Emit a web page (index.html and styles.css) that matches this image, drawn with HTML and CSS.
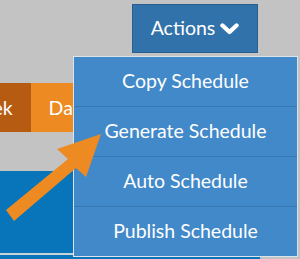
FILE: index.html
```html
<!DOCTYPE html>
<html lang="en">
<head>
  <meta charset="UTF-8">
  <title>Schedule Actions</title>
  <link rel="stylesheet" href="styles.css">
</head>
<body>
  <div class="page">
    <div class="toolbar">
      <button class="actions">Actions
        <svg class="chevron" width="19" height="12" viewBox="0 0 19 12"><polyline points="2.5,2.5 9.5,9 16.5,2.5" fill="none" stroke="#fff" stroke-width="4.4" stroke-linecap="round" stroke-linejoin="round"/></svg>
      </button>
    </div>

    <div class="tabs">
      <div class="tab active">Week</div>
      <div class="tab">Day</div>
    </div>

    <div class="spacer"></div>
    <div class="panel"></div>
    <div class="divider"></div>
    <div class="panel next"></div>

    <ul class="menu">
      <li>Copy Schedule</li>
      <li>Generate Schedule</li>
      <li>Auto Schedule</li>
      <li>Publish Schedule</li>
    </ul>

    <svg class="pointer" width="300" height="259" viewBox="0 0 300 259">
      <polygon points="101,134 57,149 68,159 6,210 14,221 76,168 86,177" fill="#ee8a22"/>
    </svg>
  </div>
</body>
</html>
```

FILE: styles.css
```css
body {
  margin: 0;
  background-color: #c3c3c3;
  font-family: Lato, "Open Sans", sans-serif;
}

.page {
  position: relative;
  width: 300px;
  height: 259px;
  overflow: hidden;
}

.toolbar {
  display: flex;
  justify-content: flex-end;
  height: 83px;
  padding-right: 42px;
  box-sizing: border-box;
}

.actions {
  display: flex;
  align-items: center;
  justify-content: center;
  gap: 5px;
  margin-top: 4px;
  width: 126px;
  height: 49px;
  padding: 0 0 2px;
  background-color: #3272ab;
  border: 1px solid #2a5e8e;
  color: #fff;
  font-family: Lato, sans-serif;
  font-size: 19.5px;
}

.chevron {
  margin-top: 2px;
}

.tabs {
  display: flex;
  height: 49px;
}

.tab {
  display: flex;
  align-items: center;
  padding: 0 18px;
  background-color: #ee8a22;
  color: #fff;
  font-size: 19.5px;
}

.tab.active {
  background-color: #b65c12;
  margin-left: -55px;
  padding: 0 18px;
}

.spacer {
  height: 39px;
}

.panel {
  width: 73px;
  height: 82px;
  background-color: #0874ba;
  border-right: 1px solid #a9b9c8;
}

.panel.next {
  width: 260px;
  height: 10px;
}

.divider {
  width: 74px;
  height: 2px;
  background-color: #c9d2da;
}

.menu {
  position: absolute;
  left: 73px;
  top: 56px;
  width: 223px;
  margin: 0;
  padding: 0;
  list-style: none;
  background-color: #4289c9;
  border: 1px solid #dde3ea;
}

.menu li {
  height: 49px;
  line-height: 48px;
  text-align: center;
  color: #fff;
  font-size: 19.5px;
  border-bottom: 1px solid #3777b2;
}

.menu li:last-child {
  border-bottom: none;
}

.pointer {
  position: absolute;
  left: 0;
  top: 0;
}
```
